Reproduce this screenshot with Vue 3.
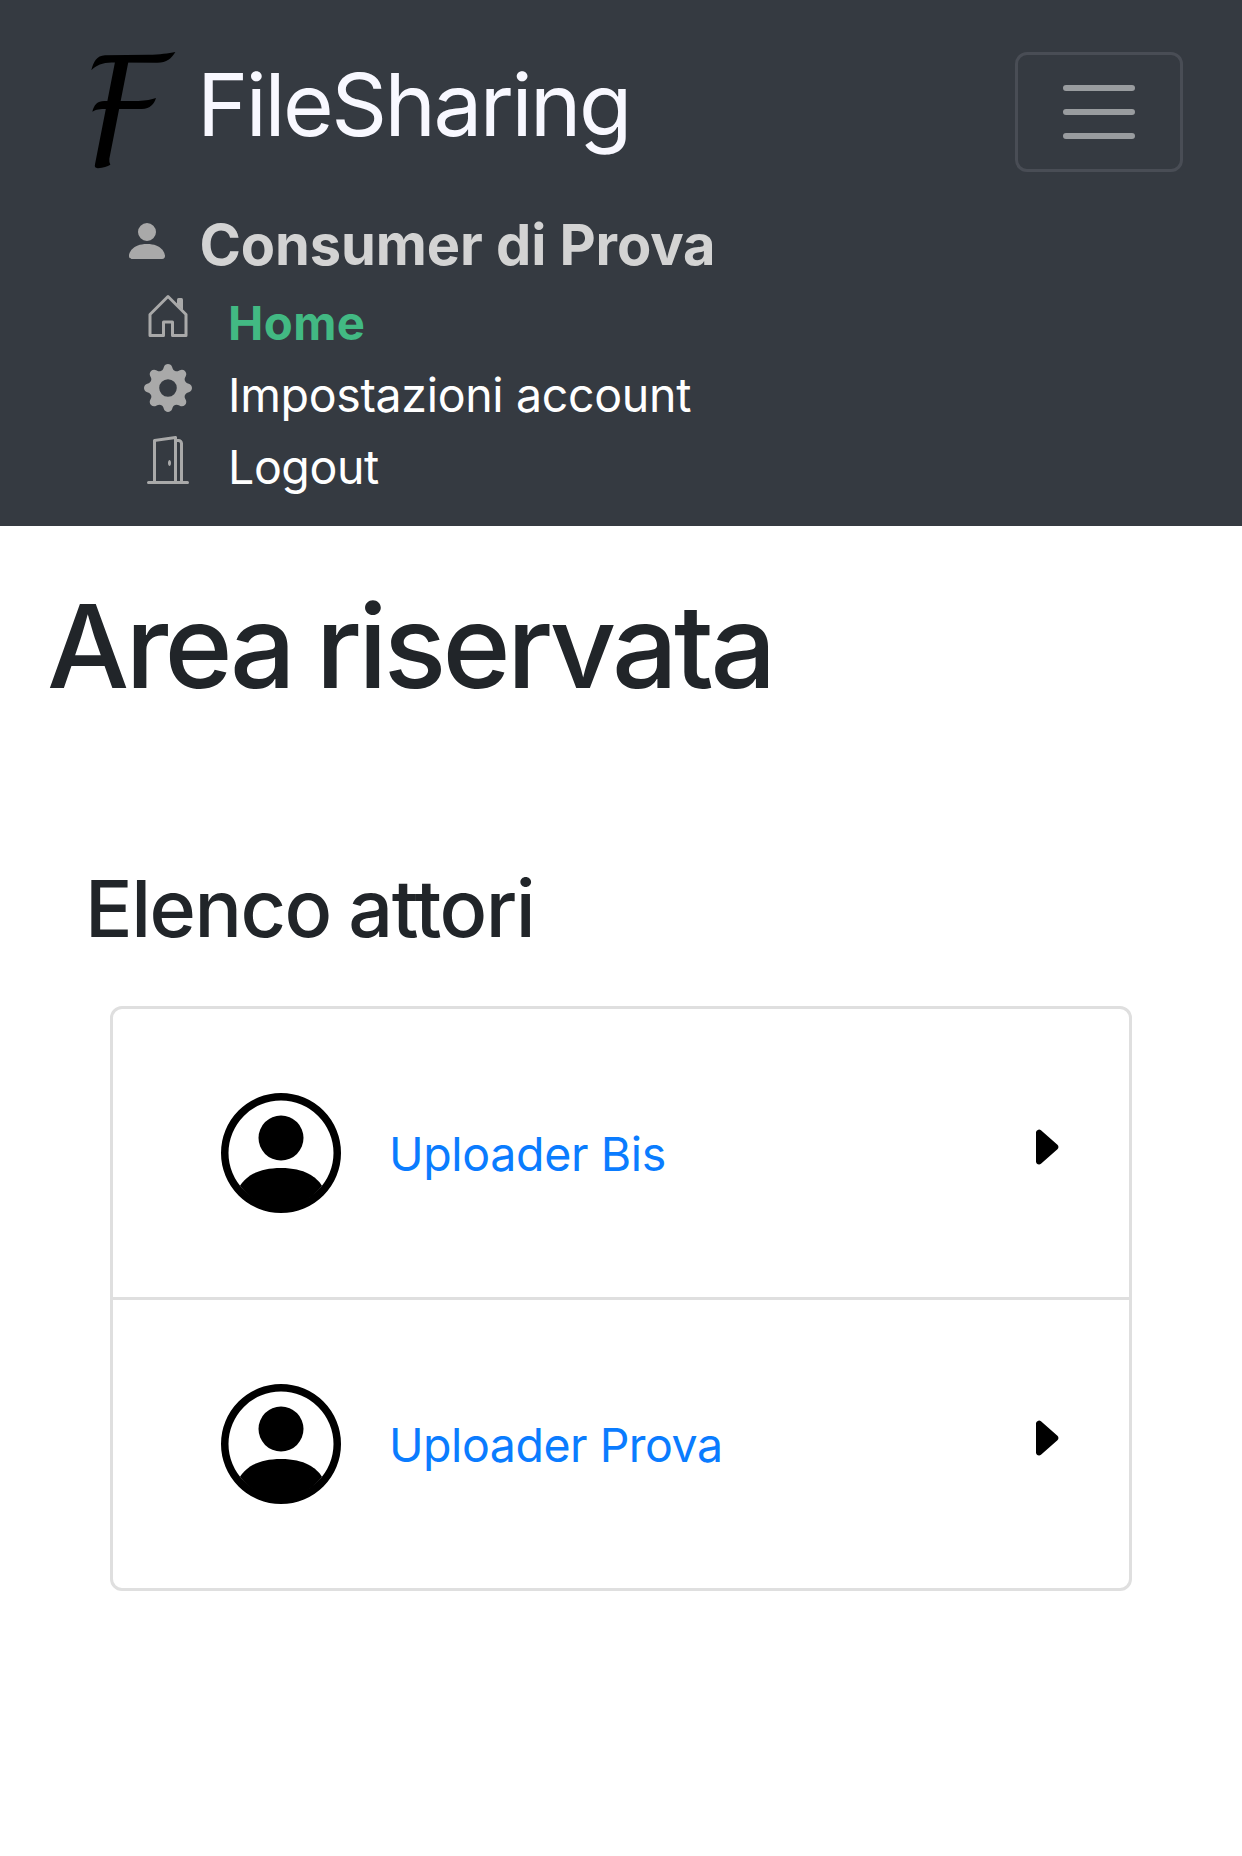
<script setup>
const menu = [
  {
    label: 'Home',
    cls: 'active',
    paths: [
      'M7.646 1.146a.5.5 0 0 1 .708 0l6 6a.5.5 0 0 1 .146.354v7a.5.5 0 0 1-.5.5H9.5a.5.5 0 0 1-.5-.5v-4H7v4a.5.5 0 0 1-.5.5H2a.5.5 0 0 1-.5-.5v-7a.5.5 0 0 1 .146-.354l6-6zM2.5 7.707V14H6v-4a.5.5 0 0 1 .5-.5h3a.5.5 0 0 1 .5.5v4h3.5V7.707L8 2.207l-5.5 5.5z',
      'M13 2.5V6l-2-2V2.5a.5.5 0 0 1 .5-.5h1a.5.5 0 0 1 .5.5z',
    ],
  },
  {
    label: 'Impostazioni account',
    cls: 'settings',
    paths: [
      'M9.405 1.05c-.413-1.4-2.397-1.4-2.81 0l-.1.34a1.464 1.464 0 0 1-2.105.872l-.31-.17c-1.283-.698-2.686.705-1.987 1.987l.169.311c.446.82.023 1.841-.872 2.105l-.34.1c-1.4.413-1.4 2.397 0 2.81l.34.1a1.464 1.464 0 0 1 .872 2.105l-.17.31c-.698 1.283.705 2.686 1.987 1.987l.311-.169a1.464 1.464 0 0 1 2.105.872l.1.34c.413 1.4 2.397 1.4 2.81 0l.1-.34a1.464 1.464 0 0 1 2.105-.872l.31.17c1.283.698 2.686-.705 1.987-1.987l-.169-.311a1.464 1.464 0 0 1 .872-2.105l.34-.1c1.4-.413 1.4-2.397 0-2.81l-.34-.1a1.464 1.464 0 0 1-.872-2.105l.17-.31c.698-1.283-.705-2.686-1.987-1.987l-.311.169a1.464 1.464 0 0 1-2.105-.872l-.1-.34zM8 10.93a2.929 2.929 0 1 0 0-5.86 2.929 2.929 0 0 0 0 5.86z',
    ],
  },
  {
    label: 'Logout',
    cls: 'logout',
    paths: [
      'M1 15.5a.5.5 0 0 1 .5-.5h13a.5.5 0 0 1 0 1h-13a.5.5 0 0 1-.5-.5zM11.5 2H11V1h.5A1.5 1.5 0 0 1 13 2.5V15h-1V2.5a.5.5 0 0 0-.5-.5z',
      'M10.828.122A.5.5 0 0 1 11 .5V15h-1V1.077l-6 .857V15H3V1.5a.5.5 0 0 1 .43-.495l7-1a.5.5 0 0 1 .398.117z',
      'M8 9c0 .552.224 1 .5 1s.5-.448.5-1-.224-1-.5-1-.5.448-.5 1z',
    ],
  },
]

const actors = [
  { name: 'Uploader Bis', cls: 'bis' },
  { name: 'Uploader Prova', cls: 'prova' },
]
</script>

<template>
  <div class="page">
    <header class="navbar">
      <div class="bar">
        <a class="brand">
          <svg class="logo" viewBox="63 63 255 354" aria-hidden="true">
            <path d="M64 121C70 95 80 77 105 75.500L235 74.500C270 74 295 70 316 66C305 85 290 98 262 98L125 97.500C98 98 78 106 64 121Z" />
            <path d="M67 245C72 225 82 213 103 213L205 213C228 212 245 209 258 204C252 222 242 236 215 237L110 237C90 237 78 238 67 245Z" />
            <path d="M135 96L175 96L118 386Q117 398 121 404Q108 412 84 414.500Q72 415 75 403Z" />
          </svg>
          <span class="brand-name">FileSharing</span>
        </a>
        <button class="toggler" type="button" aria-label="Menu">
          <svg viewBox="0 0 30 30">
            <path d="M4 7h22M4 15h22M4 23h22" stroke-width="2" stroke-linecap="round" stroke-miterlimit="10" />
          </svg>
        </button>
      </div>

      <div class="user">
        <svg class="icon" viewBox="0 0 16 16">
          <path d="M3 14s-1 0-1-1 1-4 6-4 6 3 6 4-1 1-1 1H3zm5-6a3 3 0 1 0 0-6 3 3 0 0 0 0 6z" />
        </svg>
        <span>Consumer di Prova</span>
      </div>

      <ul class="menu">
        <li v-for="m in menu" :key="m.label" :class="m.cls">
          <svg class="icon" viewBox="0 0 16 16">
            <path v-for="d in m.paths" :key="d" :d="d" fill-rule="evenodd" />
          </svg>
          <a>{{ m.label }}</a>
        </li>
      </ul>
    </header>

    <main>
      <h1>Area riservata</h1>
      <section>
        <h2>Elenco attori</h2>
        <ul class="actors">
          <li v-for="a in actors" :key="a.name" :class="a.cls">
            <svg class="avatar" viewBox="0 0 16 16">
              <path d="M13.468 12.37C12.758 11.226 11.195 10 8 10s-4.757 1.225-5.468 2.37A7.3 7.3 0 0 0 8 15.300a7.3 7.3 0 0 0 5.468-2.930z" />
              <path d="M8 9a3 3 0 1 0 0-6 3 3 0 0 0 0 6z" />
              <path fill-rule="evenodd" d="M8 1a7 7 0 1 0 0 14A7 7 0 0 0 8 1zM0 8a8 8 0 1 1 16 0A8 8 0 0 1 0 8z" />
            </svg>
            <a>{{ a.name }}</a>
            <svg class="caret" viewBox="0 0 16 16">
              <path d="M12.14 8.753l-5.482 4.796c-.646.566-1.658.106-1.658-.753V3.204a1 1 0 0 1 1.659-.753l5.48 4.796a1 1 0 0 1 0 1.506z" />
            </svg>
          </li>
        </ul>
      </section>
    </main>
  </div>
</template>

<style>
body {
  margin: 0;
  background: #fff;
}
</style>

<style scoped>
.page {
  min-height: 1856px;
  font-family: Inter, "Liberation Sans", sans-serif;
  color: #212529;
  white-space: nowrap;
}

ul {
  margin: 0;
  padding: 0;
  list-style: none;
}

.navbar {
  box-sizing: border-box;
  height: 526px;
  padding-top: 52px;
  background: #353a41;
}

.bar {
  display: flex;
  justify-content: space-between;
  align-items: flex-start;
  height: 120px;
  padding: 0 59px 0 91px;
}

.brand {
  display: flex;
  align-items: flex-start;
  gap: 21px;
}

.logo {
  width: 85px;
  height: 118px;
  margin-top: -1px;
}

.brand-name {
  font-size: 87px;
  line-height: 105px;
  letter-spacing: -2.5px;
  color: #f8f8ff;
}

.toggler {
  box-sizing: border-box;
  display: flex;
  justify-content: center;
  align-items: center;
  width: 168px;
  height: 120px;
  padding: 0;
  border: 3px solid #494d55;
  border-radius: 12px;
  background: none;
}

.toggler svg {
  width: 90px;
  height: 90px;
  fill: none;
  stroke: #999c9f;
}

.icon {
  flex: none;
  width: 48px;
  height: 48px;
  fill: #a9a9a9;
}

.user {
  display: flex;
  align-items: flex-start;
  gap: 28.5px;
  margin-top: 37px;
  padding-left: 123px;
  font-size: 56px;
  font-weight: 700;
  line-height: 72px;
  letter-spacing: -0.1px;
  color: #d3d3d3;
}

.user .icon {
  margin-top: 8px;
}

.menu {
  margin-top: 6px;
  padding-left: 144px;
}

.menu li {
  display: flex;
  align-items: flex-start;
  gap: 36px;
  height: 72px;
  font-size: 46.5px;
  line-height: 72px;
  color: #fff;
}

.menu .icon {
  margin-top: 5px;
}

.menu .active {
  font-size: 47.3px;
  font-weight: 700;
  letter-spacing: 0.4px;
  color: #42b983;
}

.menu .settings {
  letter-spacing: -0.33px;
}

.menu .logout {
  letter-spacing: -0.4px;
}

h1 {
  margin: 48px 0 0 47px;
  font-size: 116px;
  font-weight: 500;
  line-height: 144px;
  letter-spacing: -3.75px;
  word-spacing: -3.5px;
}

section {
  margin: 142px 110px 0 85px;
}

h2 {
  margin: 0;
  font-size: 79px;
  font-weight: 500;
  line-height: 96px;
  letter-spacing: -1.5px;
  word-spacing: -2px;
}

.actors {
  margin: 50px 0 0 25px;
  border: 3px solid #dfdfdf;
  border-radius: 12px;
}

.actors li {
  display: flex;
  align-items: center;
  height: 288px;
  padding: 0 60px 0 108px;
}

.actors li + li {
  border-top: 3px solid #dfdfdf;
}

.avatar {
  width: 120px;
  height: 120px;
}

.actors a {
  flex: 1;
  margin: 2px 0 0 48px;
  font-size: 46.5px;
  line-height: 72px;
  color: #0a7cff;
}

.bis a {
  letter-spacing: -0.35px;
}

.prova a {
  letter-spacing: -0.48px;
}

.caret {
  width: 48px;
  height: 48px;
  margin-top: -12px;
}
</style>
